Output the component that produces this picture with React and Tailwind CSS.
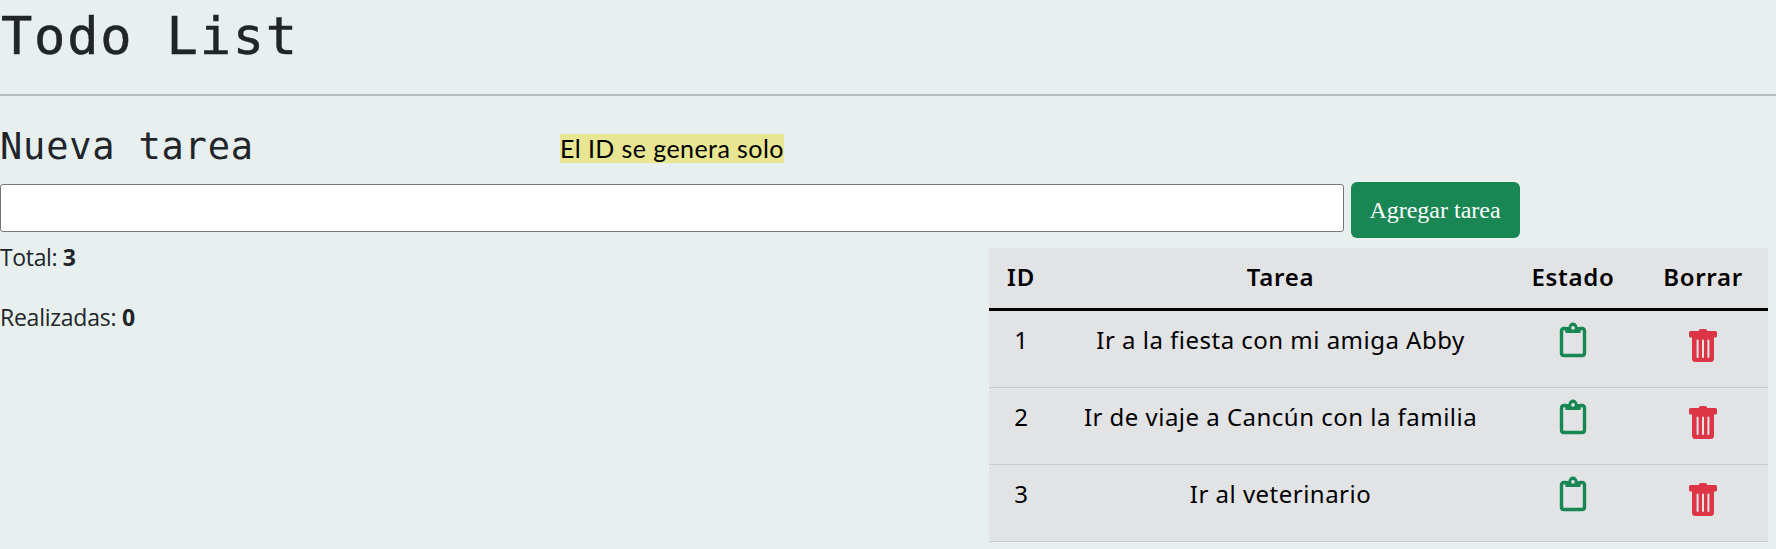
const tasks = [
  { id: 1, name: "Ir a la fiesta con mi amiga Abby" },
  { id: 2, name: "Ir de viaje a Cancún con la familia" },
  { id: 3, name: "Ir al veterinario" },
];

function ClipboardIcon() {
  return (
    <svg width="28" height="36" viewBox="0 0 28 36" className="block">
      <path d="M7 6.500H5Q2.500 6.500 2.500 9V31Q2.500 33.500 5 33.500H23Q25.500 33.500 25.500 31V9Q25.500 6.500 23 6.500H21" fill="none" stroke="#198754" strokeWidth="3.400" />
      <path fillRule="evenodd" fill="#198754" d="M6.200 5H9.400C10.200 2 11.500.4 14 .4S17.800 2 18.600 5h3.200v4.400a1.500 1.500 0 0 1-1.500 1.500H7.700a1.500 1.500 0 0 1-1.500-1.500zM14 4.100a1.800 1.800 0 1 0 0 3.600 1.800 1.800 0 0 0 0-3.600z" />
    </svg>
  );
}

function TrashIcon() {
  return (
    <svg width="28" height="33" viewBox="0 0 28 33" className="block" fill="#dc3545">
      <path d="M1.600 2H9.500Q10.300 0 12 0H16Q17.700 0 18.500 2H26.400Q28 2 28 3.600V7Q28 8.600 26.400 8.600H25V29.500Q25 33 21.500 33H6.500Q3 33 3 29.500V8.600H1.600Q0 8.600 0 7V3.600Q0 2 1.600 2Z" />
      <path d="M8.600 11.500V28M14 11.500V28M19.400 11.500V28" stroke="#e2e3e5" strokeWidth="2" strokeLinecap="round" />
    </svg>
  );
}

const headCell = "border-b-[3px] border-black px-0 pt-0 pb-0.5 font-semibold tracking-[0.7px]";
const cell = "border-b border-[#cbccce] px-0 pb-0 pt-[11px]";

export default function App() {
  return (
    <main className="flex h-[549px] w-full flex-col overflow-hidden bg-[#e8f0ef] text-[#212529]">
      <header className="flex h-[96px] shrink-0 items-start border-b-2 border-[#b3bcbb]">
        <h1 className="whitespace-pre pl-px font-['DejaVu_Sans_Mono',monospace] text-[52px] leading-[72px] tracking-[1.8px] [-webkit-text-stroke:0.5px_#212529]">Todo List</h1>
      </header>
      <div className="flex h-[86px] shrink-0 items-center">
        <h2 className="w-[560px] whitespace-pre pt-[15px] font-['DejaVu_Sans_Mono',monospace] text-[37px] leading-[50px] tracking-[0.8px]">Nueva tarea</h2>
        <mark className="mt-[18px] h-[29px] whitespace-nowrap bg-[#e8e693] font-['Lato',sans-serif] text-[25px] leading-[28px] tracking-[0.42px] text-black">El ID se genera solo</mark>
      </div>
      <form className="flex h-14 shrink-0 items-start gap-[7px]">
        <input aria-label="Nueva tarea" className="mt-0.5 h-12 w-[1344px] rounded-[3px] border border-[#767676] bg-white px-2" />
        <button type="button" className="h-14 w-[169px] rounded-md bg-[#198754] pb-px pr-px font-['Liberation_Serif',serif] text-2xl text-white">Agregar tarea</button>
      </form>
      <div className="flex min-h-0 flex-1">
        <section className="flex w-[989px] flex-col gap-6 pt-px font-['Open_Sans',sans-serif] text-[23px] leading-9">
          <p><span className="tracking-[-0.35px]">Total: </span><b>3</b></p>
          <p><span className="tracking-[-0.25px]">Realizadas: </span><b>0</b></p>
        </section>
        <table className="mt-2.5 h-[294px] w-[779px] table-fixed border-separate border-spacing-0 self-start bg-[#e2e3e5] text-center font-['Noto_Sans',sans-serif] text-2xl leading-9 text-black">
          <colgroup><col className="w-[64px]" /><col className="w-[455px]" /><col className="w-[130px]" /><col className="w-[130px]" /></colgroup>
          <thead>
            <tr className="h-[63px]">
              <th className={headCell}>ID</th>
              <th className={headCell}>Tarea</th>
              <th className={headCell}>Estado</th>
              <th className={headCell}>Borrar</th>
            </tr>
          </thead>
          <tbody>
            {tasks.map((t) => (
              <tr key={t.id} className="h-[77px] align-top">
                <td className={cell}>{t.id}</td>
                <td className={`${cell} tracking-[0.48px]`}>{t.name}</td>
                <td className={cell}><div className="flex justify-center"><ClipboardIcon /></div></td>
                <td className={cell}><div className="flex justify-center pt-[7px]"><TrashIcon /></div></td>
              </tr>
            ))}
          </tbody>
        </table>
      </div>
    </main>
  );
}
